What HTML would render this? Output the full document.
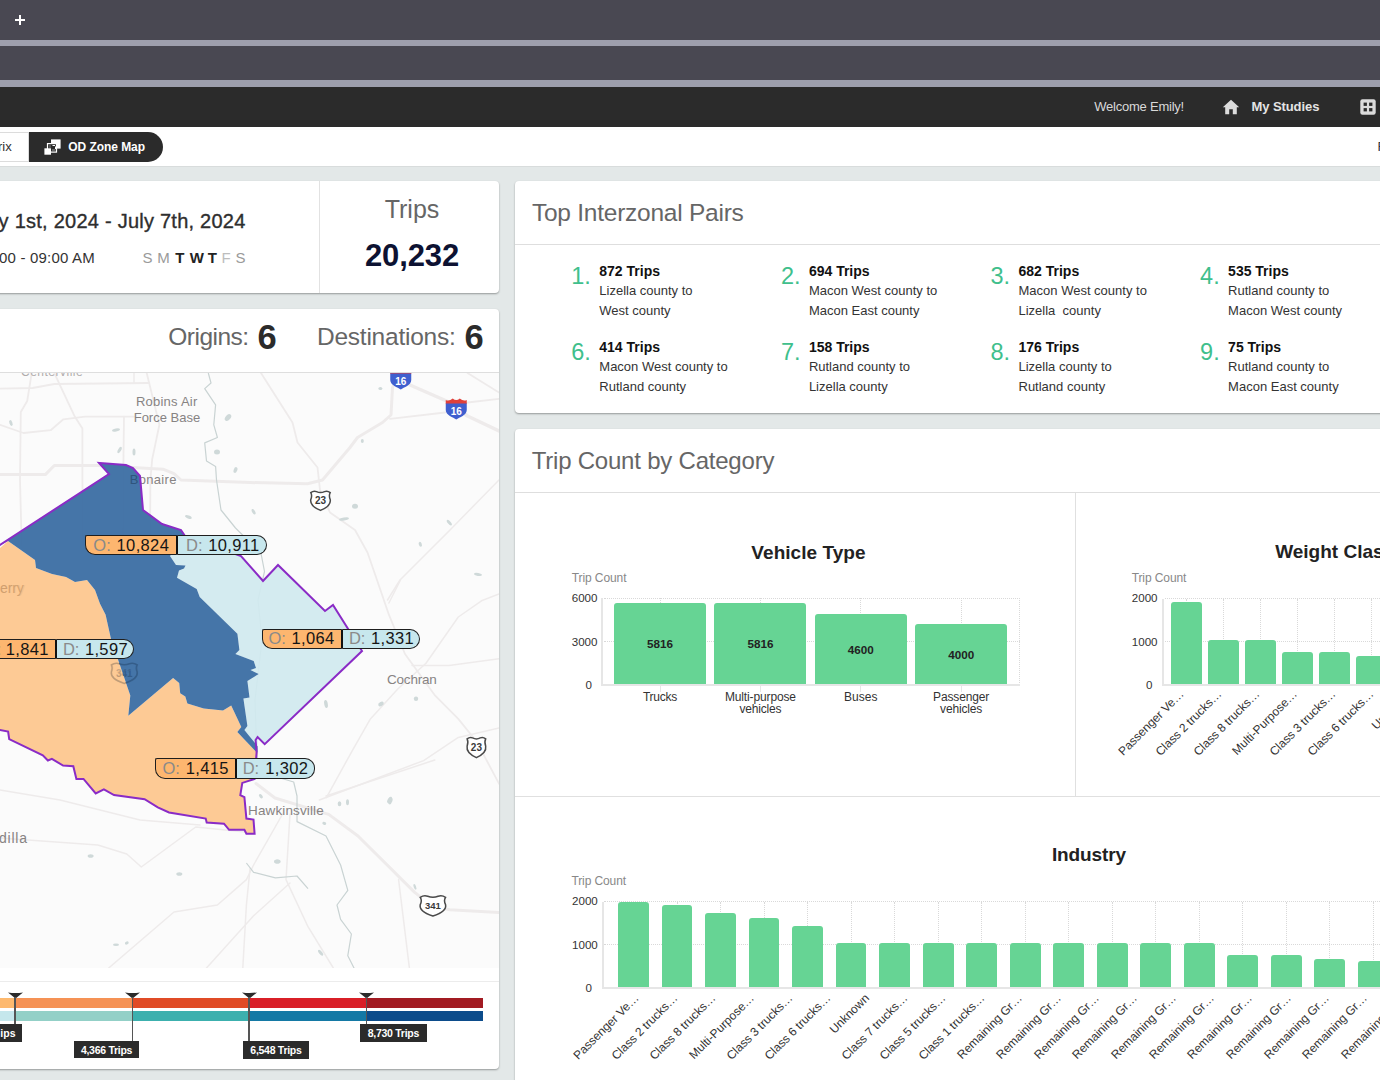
<!DOCTYPE html><html><head><meta charset="utf-8"><style>
html,body{margin:0;padding:0}
body{width:1380px;height:1080px;overflow:hidden;position:relative;background:#e3e8e8;font-family:"Liberation Sans",sans-serif}
.t{position:absolute;line-height:1;white-space:nowrap}
.b{position:absolute;box-sizing:border-box}
svg{position:absolute;overflow:hidden}
</style></head><body>
<div class="b" style="left:0px;top:0px;width:1380px;height:40px;background:#494852;"></div>
<div class="b" style="left:0px;top:40px;width:1380px;height:6px;background:#9e9fad;"></div>
<div class="b" style="left:0px;top:46px;width:1380px;height:34px;background:#494852;"></div>
<div class="b" style="left:0px;top:80px;width:1380px;height:7px;background:#9e9fad;"></div>
<div class="b" style="left:0px;top:87px;width:1380px;height:40px;background:#2b2b2b;"></div>
<div class="b" style="left:15px;top:19px;width:10px;height:2px;background:#fff;"></div>
<div class="b" style="left:19px;top:14.6px;width:2px;height:10.4px;background:#fff;"></div>
<div class="t" style="left:1094.30px;top:99.90px;font-size:13px;color:#d9d9d9;letter-spacing:-0.232px;">Welcome Emily!</div>
<svg style="left:1222px;top:99px" width="18" height="16" viewBox="0 0 18 16"><path d="M9 0.8 L17.2 8.2 L14.8 8.2 L14.8 15.2 L10.8 15.2 L10.8 10.2 L7.2 10.2 L7.2 15.2 L3.2 15.2 L3.2 8.2 L0.8 8.2 Z" fill="#dcdcdc"/></svg>
<div class="t" style="left:1251.50px;top:99.70px;font-size:13px;color:#e4e4e4;font-weight:bold;letter-spacing:-0.082px;">My Studies</div>
<svg style="left:1360px;top:99px" width="16" height="16" viewBox="0 0 16 16"><rect x="0.3" y="0.3" width="15.4" height="15.4" rx="2.2" fill="#dcdcdc"/><rect x="3.6" y="3.6" width="3.3" height="3.3" fill="#2b2b2b"/><rect x="9.1" y="3.6" width="3.3" height="3.3" fill="#2b2b2b"/><rect x="3.6" y="9.1" width="3.3" height="3.3" fill="#2b2b2b"/><rect x="9.1" y="9.1" width="3.3" height="3.3" fill="#2b2b2b"/></svg>
<div class="b" style="left:0px;top:127px;width:1380px;height:39px;background:#fff;"></div>
<div class="b" style="left:0px;top:166px;width:1380px;height:1px;background:#d8dcdc;"></div>
<div class="b" style="left:-10px;top:131.5px;width:39px;height:30.5px;background:#fff;border:1px solid #dcdcdc;"></div>
<div class="t" style="left:-2.02px;top:139.80px;font-size:13px;color:#333;">rix</div>
<div class="b" style="left:29px;top:131.5px;width:133.5px;height:30.5px;background:#2b2b2b;border-radius:0 15.5px 15.5px 0"></div>
<svg style="left:44px;top:139px" width="18" height="17" viewBox="0 0 18 17"><rect x="7" y="0.4" width="9.6" height="9.2" fill="#fff"/><rect x="3.5" y="4.6" width="9" height="8.5" fill="#2b2b2b" stroke="#fff" stroke-width="1.2"/><rect x="5" y="6" width="2" height="3" fill="#555"/><rect x="8" y="10" width="3.5" height="2" fill="#666"/><path d="M8.5 6.5 L11 6.5 M11.5 7.5 L11.5 10" stroke="#fff" stroke-width="1"/><rect x="0.4" y="9.3" width="6.6" height="6.4" fill="#fff"/></svg>
<div class="t" style="left:68.30px;top:140.64px;font-size:12px;color:#fff;font-weight:bold;letter-spacing:-0.058px;">OD Zone Map</div>
<div class="t" style="left:1377.40px;top:139.60px;font-size:13px;color:#2c3440;">F</div>
<div class="b" style="left:-10px;top:181px;width:509px;height:112px;background:#fff;border-radius:4px;box-shadow:0 1px 2px rgba(0,0,0,0.35);"></div>
<div class="b" style="left:319px;top:181px;width:1px;height:112px;background:#e2e2e2;"></div>
<div class="t" style="left:-1.40px;top:211.07px;font-size:20px;color:#2e2e2e;letter-spacing:0.244px;-webkit-text-stroke:0.35px #2e2e2e;">y 1st, 2024 - July 7th, 2024</div>
<div class="t" style="left:-1.00px;top:249.50px;font-size:15px;color:#333;letter-spacing:0.201px;">00 - 09:00 AM</div>
<div class="t" style="left:142.40px;top:249.50px;font-size:15px;color:#9a9a9a;">S</div>
<div class="t" style="left:157.30px;top:249.50px;font-size:15px;color:#9a9a9a;">M</div>
<div class="t" style="left:175.30px;top:249.50px;font-size:15px;color:#222;font-weight:bold;">T</div>
<div class="t" style="left:189.70px;top:249.50px;font-size:15px;color:#222;font-weight:bold;">W</div>
<div class="t" style="left:207.70px;top:249.50px;font-size:15px;color:#222;font-weight:bold;">T</div>
<div class="t" style="left:221.50px;top:249.50px;font-size:15px;color:#bdbdbd;">F</div>
<div class="t" style="left:235.40px;top:249.50px;font-size:15px;color:#9a9a9a;">S</div>
<div class="t" style="left:384.69px;top:196.84px;font-size:25px;color:#666;">Trips</div>
<div class="t" style="left:365.00px;top:239.76px;font-size:31px;color:#0d1232;font-weight:bold;letter-spacing:-0.136px;">20,232</div>
<div class="b" style="left:-10px;top:309px;width:509px;height:760px;background:#fff;border-radius:4px;box-shadow:0 1px 2px rgba(0,0,0,0.35);"></div>
<div class="t" style="left:168.30px;top:324.66px;font-size:24.5px;color:#666;letter-spacing:-0.514px;">Origins:</div>
<div class="t" style="left:257.60px;top:320.40px;font-size:34.5px;color:#2b2b2b;font-weight:bold;">6</div>
<div class="t" style="left:317.00px;top:324.66px;font-size:24.5px;color:#666;letter-spacing:-0.241px;">Destinations:</div>
<div class="t" style="left:464.60px;top:320.40px;font-size:34.5px;color:#2b2b2b;font-weight:bold;">6</div>
<div class="b" style="left:0px;top:372px;width:499px;height:1px;background:#dedede;"></div>
<div class="b" style="left:0px;top:981px;width:499px;height:1px;background:#ececec;"></div>
<div class="b" style="left:515px;top:181px;width:875px;height:232px;background:#fff;border-radius:4px;box-shadow:0 1px 2px rgba(0,0,0,0.35);"></div>
<div class="b" style="left:515px;top:244px;width:865px;height:1px;background:#dedede;"></div>
<div class="t" style="left:531.90px;top:200.66px;font-size:24.5px;color:#666;letter-spacing:-0.241px;">Top Interzonal Pairs</div>
<div class="t" style="left:571.30px;top:265.11px;font-size:23.5px;color:#3fbf8c;">1.</div>
<div class="t" style="left:599.30px;top:263.95px;font-size:14px;color:#111;font-weight:bold;">872 Trips</div>
<div class="t" style="left:599.30px;top:284.10px;font-size:13px;color:#333;">Lizella county to</div>
<div class="t" style="left:599.30px;top:304.00px;font-size:13px;color:#333;">West county</div>
<div class="t" style="left:780.90px;top:265.11px;font-size:23.5px;color:#3fbf8c;">2.</div>
<div class="t" style="left:808.90px;top:263.95px;font-size:14px;color:#111;font-weight:bold;">694 Trips</div>
<div class="t" style="left:808.90px;top:284.10px;font-size:13px;color:#333;">Macon West county to</div>
<div class="t" style="left:808.90px;top:304.00px;font-size:13px;color:#333;">Macon East county</div>
<div class="t" style="left:990.50px;top:265.11px;font-size:23.5px;color:#3fbf8c;">3.</div>
<div class="t" style="left:1018.50px;top:263.95px;font-size:14px;color:#111;font-weight:bold;">682 Trips</div>
<div class="t" style="left:1018.50px;top:284.10px;font-size:13px;color:#333;">Macon West county to</div>
<div class="t" style="left:1018.50px;top:304.00px;font-size:13px;color:#333;">Lizella&nbsp; county</div>
<div class="t" style="left:1200.10px;top:265.11px;font-size:23.5px;color:#3fbf8c;">4.</div>
<div class="t" style="left:1228.10px;top:263.95px;font-size:14px;color:#111;font-weight:bold;">535 Trips</div>
<div class="t" style="left:1228.10px;top:284.10px;font-size:13px;color:#333;">Rutland county to</div>
<div class="t" style="left:1228.10px;top:304.00px;font-size:13px;color:#333;">Macon West county</div>
<div class="t" style="left:571.30px;top:341.11px;font-size:23.5px;color:#3fbf8c;">6.</div>
<div class="t" style="left:599.30px;top:339.95px;font-size:14px;color:#111;font-weight:bold;">414 Trips</div>
<div class="t" style="left:599.30px;top:360.10px;font-size:13px;color:#333;">Macon West county to</div>
<div class="t" style="left:599.30px;top:380.00px;font-size:13px;color:#333;">Rutland county</div>
<div class="t" style="left:780.90px;top:341.11px;font-size:23.5px;color:#3fbf8c;">7.</div>
<div class="t" style="left:808.90px;top:339.95px;font-size:14px;color:#111;font-weight:bold;">158 Trips</div>
<div class="t" style="left:808.90px;top:360.10px;font-size:13px;color:#333;">Rutland county to</div>
<div class="t" style="left:808.90px;top:380.00px;font-size:13px;color:#333;">Lizella county</div>
<div class="t" style="left:990.50px;top:341.11px;font-size:23.5px;color:#3fbf8c;">8.</div>
<div class="t" style="left:1018.50px;top:339.95px;font-size:14px;color:#111;font-weight:bold;">176 Trips</div>
<div class="t" style="left:1018.50px;top:360.10px;font-size:13px;color:#333;">Lizella county to</div>
<div class="t" style="left:1018.50px;top:380.00px;font-size:13px;color:#333;">Rutland county</div>
<div class="t" style="left:1200.10px;top:341.11px;font-size:23.5px;color:#3fbf8c;">9.</div>
<div class="t" style="left:1228.10px;top:339.95px;font-size:14px;color:#111;font-weight:bold;">75 Trips</div>
<div class="t" style="left:1228.10px;top:360.10px;font-size:13px;color:#333;">Rutland county to</div>
<div class="t" style="left:1228.10px;top:380.00px;font-size:13px;color:#333;">Macon East county</div>
<div class="b" style="left:515px;top:429px;width:875px;height:700px;background:#fff;border-radius:4px;box-shadow:0 1px 2px rgba(0,0,0,0.35);"></div>
<div class="b" style="left:515px;top:492px;width:865px;height:1px;background:#dedede;"></div>
<div class="t" style="left:531.70px;top:448.68px;font-size:24px;color:#666;letter-spacing:-0.214px;">Trip Count by Category</div>
<div class="b" style="left:1075px;top:493px;width:1px;height:303px;background:#e0e0e0;"></div>
<div class="b" style="left:515px;top:796px;width:865px;height:1px;background:#e0e0e0;"></div>
<div class="t" style="left:751.35px;top:542.62px;font-size:19px;color:#222;font-weight:bold;letter-spacing:0.050px;">Vehicle Type</div>
<div class="t" style="left:571.80px;top:572.04px;font-size:12px;color:#888;letter-spacing:-0.098px;">Trip Count</div>
<div class="t" style="left:571.69px;top:592.18px;font-size:11.6px;color:#333;">6000</div>
<div class="t" style="left:571.69px;top:635.88px;font-size:11.6px;color:#333;">3000</div>
<div class="t" style="left:585.55px;top:678.93px;font-size:11.6px;color:#333;">0</div>
<div class="b" style="left:604px;top:597.7px;width:416px;height:0;border-top:1px dotted #d9d9d9"></div>
<div class="b" style="left:604px;top:640.75px;width:416px;height:0;border-top:1px dotted #d9d9d9"></div>
<div class="b" style="left:659.5px;top:598.2px;width:0;height:87.09999999999991px;border-left:1px dotted #d9d9d9"></div>
<div class="b" style="left:759.9px;top:598.2px;width:0;height:87.09999999999991px;border-left:1px dotted #d9d9d9"></div>
<div class="b" style="left:860.3px;top:598.2px;width:0;height:87.09999999999991px;border-left:1px dotted #d9d9d9"></div>
<div class="b" style="left:960.6px;top:598.2px;width:0;height:87.09999999999991px;border-left:1px dotted #d9d9d9"></div>
<div class="b" style="left:1019.0px;top:598.2px;width:0;height:87.09999999999991px;border-left:1px dotted #d9d9d9"></div>
<div class="b" style="left:613.90px;top:603.00px;width:92.20px;height:82.30px;background:#66d494;border-radius:3px 3px 0 0"></div>
<div class="t" style="left:646.99px;top:638.35px;font-size:11.7px;color:#222;font-weight:bold;">5816</div>
<div class="b" style="left:714.30px;top:603.00px;width:92.20px;height:82.30px;background:#66d494;border-radius:3px 3px 0 0"></div>
<div class="t" style="left:747.39px;top:638.35px;font-size:11.7px;color:#222;font-weight:bold;">5816</div>
<div class="b" style="left:814.70px;top:614.20px;width:92.20px;height:71.10px;background:#66d494;border-radius:3px 3px 0 0"></div>
<div class="t" style="left:847.79px;top:643.95px;font-size:11.7px;color:#222;font-weight:bold;">4600</div>
<div class="b" style="left:915.10px;top:624.30px;width:92.20px;height:61.00px;background:#66d494;border-radius:3px 3px 0 0"></div>
<div class="t" style="left:948.19px;top:649.00px;font-size:11.7px;color:#222;font-weight:bold;">4000</div>
<div class="b" style="left:601.4px;top:598.2px;width:2px;height:88.09999999999991px;background:#e6e6e6;"></div>
<div class="b" style="left:601.4px;top:684.3px;width:419px;height:2px;background:#e6e6e6;"></div>
<div class="b" style="left:659.5px;top:686.3px;width:1px;height:6px;background:#e6e6e6;"></div>
<div class="b" style="left:759.9px;top:686.3px;width:1px;height:6px;background:#e6e6e6;"></div>
<div class="b" style="left:860.3px;top:686.3px;width:1px;height:6px;background:#e6e6e6;"></div>
<div class="b" style="left:960.6px;top:686.3px;width:1px;height:6px;background:#e6e6e6;"></div>
<div class="t" style="left:642.95px;top:691.34px;font-size:12px;color:#333;letter-spacing:-0.243px;">Trucks</div>
<div class="t" style="left:724.90px;top:691.34px;font-size:12px;color:#333;letter-spacing:-0.131px;">Multi-purpose</div>
<div class="t" style="left:739.40px;top:703.34px;font-size:12px;color:#333;letter-spacing:-0.169px;">vehicles</div>
<div class="t" style="left:844.12px;top:691.34px;font-size:12px;color:#333;">Buses</div>
<div class="t" style="left:933.10px;top:691.34px;font-size:12px;color:#333;letter-spacing:-0.152px;">Passenger</div>
<div class="t" style="left:940.10px;top:703.34px;font-size:12px;color:#333;letter-spacing:-0.169px;">vehicles</div>
<div class="t" style="left:1275.20px;top:541.92px;font-size:19px;color:#222;font-weight:bold;">Weight Class</div>
<div class="t" style="left:1131.70px;top:572.04px;font-size:12px;color:#888;letter-spacing:-0.098px;">Trip Count</div>
<div class="t" style="left:1131.79px;top:592.28px;font-size:11.6px;color:#333;">2000</div>
<div class="t" style="left:1131.79px;top:635.78px;font-size:11.6px;color:#333;">1000</div>
<div class="t" style="left:1145.95px;top:679.18px;font-size:11.6px;color:#333;">0</div>
<div class="b" style="left:1165px;top:598.0px;width:215px;height:0;border-top:1px dotted #d9d9d9"></div>
<div class="b" style="left:1165px;top:641.3px;width:215px;height:0;border-top:1px dotted #d9d9d9"></div>
<div class="b" style="left:1186.0px;top:598.5px;width:0;height:86.70000000000005px;border-left:1px dotted #d9d9d9"></div>
<div class="b" style="left:1223.0px;top:598.5px;width:0;height:86.70000000000005px;border-left:1px dotted #d9d9d9"></div>
<div class="b" style="left:1260.0px;top:598.5px;width:0;height:86.70000000000005px;border-left:1px dotted #d9d9d9"></div>
<div class="b" style="left:1297.0px;top:598.5px;width:0;height:86.70000000000005px;border-left:1px dotted #d9d9d9"></div>
<div class="b" style="left:1334.0px;top:598.5px;width:0;height:86.70000000000005px;border-left:1px dotted #d9d9d9"></div>
<div class="b" style="left:1371.0px;top:598.5px;width:0;height:86.70000000000005px;border-left:1px dotted #d9d9d9"></div>
<div class="b" style="left:1408.0px;top:598.5px;width:0;height:86.70000000000005px;border-left:1px dotted #d9d9d9"></div>
<div class="b" style="left:1171.00px;top:602.00px;width:31.00px;height:83.20px;background:#66d494;border-radius:3px 3px 0 0"></div>
<div class="t" style="left:1094.78px;top:685.80px;font-size:12px;color:#333;transform-origin:100% 50%;transform:rotate(-45deg)">Passenger Ve…</div>
<div class="b" style="left:1208.00px;top:640.00px;width:31.00px;height:45.20px;background:#66d494;border-radius:3px 3px 0 0"></div>
<div class="t" style="left:1132.15px;top:685.80px;font-size:12px;color:#333;transform-origin:100% 50%;transform:rotate(-45deg)">Class 2 trucks…</div>
<div class="b" style="left:1245.00px;top:640.00px;width:31.00px;height:45.20px;background:#66d494;border-radius:3px 3px 0 0"></div>
<div class="t" style="left:1170.15px;top:685.80px;font-size:12px;color:#333;transform-origin:100% 50%;transform:rotate(-45deg)">Class 8 trucks…</div>
<div class="b" style="left:1282.00px;top:652.30px;width:31.00px;height:32.90px;background:#66d494;border-radius:3px 3px 0 0"></div>
<div class="t" style="left:1209.47px;top:685.80px;font-size:12px;color:#333;transform-origin:100% 50%;transform:rotate(-45deg)">Multi-Purpose…</div>
<div class="b" style="left:1319.00px;top:652.30px;width:31.00px;height:32.90px;background:#66d494;border-radius:3px 3px 0 0"></div>
<div class="t" style="left:1246.15px;top:685.80px;font-size:12px;color:#333;transform-origin:100% 50%;transform:rotate(-45deg)">Class 3 trucks…</div>
<div class="b" style="left:1356.00px;top:656.00px;width:31.00px;height:29.20px;background:#66d494;border-radius:3px 3px 0 0"></div>
<div class="t" style="left:1284.15px;top:685.80px;font-size:12px;color:#333;transform-origin:100% 50%;transform:rotate(-45deg)">Class 6 trucks…</div>
<div class="b" style="left:1393.00px;top:660.00px;width:31.00px;height:25.20px;background:#66d494;border-radius:3px 3px 0 0"></div>
<div class="t" style="left:1359.47px;top:685.80px;font-size:12px;color:#333;transform-origin:100% 50%;transform:rotate(-45deg)">Unknown</div>
<div class="b" style="left:1162.3px;top:598.5px;width:2px;height:87.70000000000005px;background:#e6e6e6;"></div>
<div class="b" style="left:1162.3px;top:684.2px;width:230px;height:2px;background:#e6e6e6;"></div>
<div class="t" style="left:1051.90px;top:845.42px;font-size:19px;color:#222;font-weight:bold;letter-spacing:-0.119px;">Industry</div>
<div class="t" style="left:571.40px;top:874.84px;font-size:12px;color:#888;letter-spacing:-0.098px;">Trip Count</div>
<div class="t" style="left:571.99px;top:895.48px;font-size:11.6px;color:#333;">2000</div>
<div class="t" style="left:571.99px;top:938.78px;font-size:11.6px;color:#333;">1000</div>
<div class="t" style="left:585.55px;top:982.08px;font-size:11.6px;color:#333;">0</div>
<div class="b" style="left:604px;top:901.2px;width:776px;height:0;border-top:1px dotted #d9d9d9"></div>
<div class="b" style="left:604px;top:944.3px;width:776px;height:0;border-top:1px dotted #d9d9d9"></div>
<div class="b" style="left:633.0px;top:901.7px;width:0;height:86.29999999999995px;border-left:1px dotted #d9d9d9"></div>
<div class="b" style="left:676.52px;top:901.7px;width:0;height:86.29999999999995px;border-left:1px dotted #d9d9d9"></div>
<div class="b" style="left:720.04px;top:901.7px;width:0;height:86.29999999999995px;border-left:1px dotted #d9d9d9"></div>
<div class="b" style="left:763.5600000000001px;top:901.7px;width:0;height:86.29999999999995px;border-left:1px dotted #d9d9d9"></div>
<div class="b" style="left:807.08px;top:901.7px;width:0;height:86.29999999999995px;border-left:1px dotted #d9d9d9"></div>
<div class="b" style="left:850.6px;top:901.7px;width:0;height:86.29999999999995px;border-left:1px dotted #d9d9d9"></div>
<div class="b" style="left:894.12px;top:901.7px;width:0;height:86.29999999999995px;border-left:1px dotted #d9d9d9"></div>
<div class="b" style="left:937.64px;top:901.7px;width:0;height:86.29999999999995px;border-left:1px dotted #d9d9d9"></div>
<div class="b" style="left:981.16px;top:901.7px;width:0;height:86.29999999999995px;border-left:1px dotted #d9d9d9"></div>
<div class="b" style="left:1024.68px;top:901.7px;width:0;height:86.29999999999995px;border-left:1px dotted #d9d9d9"></div>
<div class="b" style="left:1068.2000000000003px;top:901.7px;width:0;height:86.29999999999995px;border-left:1px dotted #d9d9d9"></div>
<div class="b" style="left:1111.7200000000003px;top:901.7px;width:0;height:86.29999999999995px;border-left:1px dotted #d9d9d9"></div>
<div class="b" style="left:1155.2400000000002px;top:901.7px;width:0;height:86.29999999999995px;border-left:1px dotted #d9d9d9"></div>
<div class="b" style="left:1198.7600000000002px;top:901.7px;width:0;height:86.29999999999995px;border-left:1px dotted #d9d9d9"></div>
<div class="b" style="left:1242.2800000000002px;top:901.7px;width:0;height:86.29999999999995px;border-left:1px dotted #d9d9d9"></div>
<div class="b" style="left:1285.8000000000002px;top:901.7px;width:0;height:86.29999999999995px;border-left:1px dotted #d9d9d9"></div>
<div class="b" style="left:1329.3200000000002px;top:901.7px;width:0;height:86.29999999999995px;border-left:1px dotted #d9d9d9"></div>
<div class="b" style="left:1372.8400000000001px;top:901.7px;width:0;height:86.29999999999995px;border-left:1px dotted #d9d9d9"></div>
<div class="b" style="left:618.10px;top:902.30px;width:30.80px;height:85.70px;background:#66d494;border-radius:3px 3px 0 0"></div>
<div class="b" style="left:661.62px;top:905.20px;width:30.80px;height:82.80px;background:#66d494;border-radius:3px 3px 0 0"></div>
<div class="b" style="left:705.14px;top:913.20px;width:30.80px;height:74.80px;background:#66d494;border-radius:3px 3px 0 0"></div>
<div class="b" style="left:748.66px;top:917.90px;width:30.80px;height:70.10px;background:#66d494;border-radius:3px 3px 0 0"></div>
<div class="b" style="left:792.18px;top:925.90px;width:30.80px;height:62.10px;background:#66d494;border-radius:3px 3px 0 0"></div>
<div class="b" style="left:835.70px;top:942.90px;width:30.80px;height:45.10px;background:#66d494;border-radius:3px 3px 0 0"></div>
<div class="b" style="left:879.22px;top:942.90px;width:30.80px;height:45.10px;background:#66d494;border-radius:3px 3px 0 0"></div>
<div class="b" style="left:922.74px;top:942.90px;width:30.80px;height:45.10px;background:#66d494;border-radius:3px 3px 0 0"></div>
<div class="b" style="left:966.26px;top:942.90px;width:30.80px;height:45.10px;background:#66d494;border-radius:3px 3px 0 0"></div>
<div class="b" style="left:1009.78px;top:942.90px;width:30.80px;height:45.10px;background:#66d494;border-radius:3px 3px 0 0"></div>
<div class="b" style="left:1053.30px;top:942.90px;width:30.80px;height:45.10px;background:#66d494;border-radius:3px 3px 0 0"></div>
<div class="b" style="left:1096.82px;top:942.90px;width:30.80px;height:45.10px;background:#66d494;border-radius:3px 3px 0 0"></div>
<div class="b" style="left:1140.34px;top:942.90px;width:30.80px;height:45.10px;background:#66d494;border-radius:3px 3px 0 0"></div>
<div class="b" style="left:1183.86px;top:942.90px;width:30.80px;height:45.10px;background:#66d494;border-radius:3px 3px 0 0"></div>
<div class="b" style="left:1227.38px;top:955.20px;width:30.80px;height:32.80px;background:#66d494;border-radius:3px 3px 0 0"></div>
<div class="b" style="left:1270.90px;top:955.20px;width:30.80px;height:32.80px;background:#66d494;border-radius:3px 3px 0 0"></div>
<div class="b" style="left:1314.42px;top:958.90px;width:30.80px;height:29.10px;background:#66d494;border-radius:3px 3px 0 0"></div>
<div class="b" style="left:1357.94px;top:961.30px;width:30.80px;height:26.70px;background:#66d494;border-radius:3px 3px 0 0"></div>
<div class="t" style="left:550.28px;top:990.40px;font-size:12px;color:#333;transform-origin:100% 50%;transform:rotate(-45deg)">Passenger Ve…</div>
<div class="t" style="left:587.98px;top:990.40px;font-size:12px;color:#333;transform-origin:100% 50%;transform:rotate(-45deg)">Class 2 trucks…</div>
<div class="t" style="left:626.31px;top:990.40px;font-size:12px;color:#333;transform-origin:100% 50%;transform:rotate(-45deg)">Class 8 trucks…</div>
<div class="t" style="left:665.96px;top:990.40px;font-size:12px;color:#333;transform-origin:100% 50%;transform:rotate(-45deg)">Multi-Purpose…</div>
<div class="t" style="left:702.97px;top:990.40px;font-size:12px;color:#333;transform-origin:100% 50%;transform:rotate(-45deg)">Class 3 trucks…</div>
<div class="t" style="left:741.30px;top:990.40px;font-size:12px;color:#333;transform-origin:100% 50%;transform:rotate(-45deg)">Class 6 trucks…</div>
<div class="t" style="left:816.95px;top:990.40px;font-size:12px;color:#333;transform-origin:100% 50%;transform:rotate(-45deg)">Unknown</div>
<div class="t" style="left:817.96px;top:990.40px;font-size:12px;color:#333;transform-origin:100% 50%;transform:rotate(-45deg)">Class 7 trucks…</div>
<div class="t" style="left:856.29px;top:990.40px;font-size:12px;color:#333;transform-origin:100% 50%;transform:rotate(-45deg)">Class 5 trucks…</div>
<div class="t" style="left:894.62px;top:990.40px;font-size:12px;color:#333;transform-origin:100% 50%;transform:rotate(-45deg)">Class 1 trucks…</div>
<div class="t" style="left:934.27px;top:990.40px;font-size:12px;color:#333;transform-origin:100% 50%;transform:rotate(-45deg)">Remaining Gr…</div>
<div class="t" style="left:972.60px;top:990.40px;font-size:12px;color:#333;transform-origin:100% 50%;transform:rotate(-45deg)">Remaining Gr…</div>
<div class="t" style="left:1010.93px;top:990.40px;font-size:12px;color:#333;transform-origin:100% 50%;transform:rotate(-45deg)">Remaining Gr…</div>
<div class="t" style="left:1049.26px;top:990.40px;font-size:12px;color:#333;transform-origin:100% 50%;transform:rotate(-45deg)">Remaining Gr…</div>
<div class="t" style="left:1087.59px;top:990.40px;font-size:12px;color:#333;transform-origin:100% 50%;transform:rotate(-45deg)">Remaining Gr…</div>
<div class="t" style="left:1125.92px;top:990.40px;font-size:12px;color:#333;transform-origin:100% 50%;transform:rotate(-45deg)">Remaining Gr…</div>
<div class="t" style="left:1164.25px;top:990.40px;font-size:12px;color:#333;transform-origin:100% 50%;transform:rotate(-45deg)">Remaining Gr…</div>
<div class="t" style="left:1202.58px;top:990.40px;font-size:12px;color:#333;transform-origin:100% 50%;transform:rotate(-45deg)">Remaining Gr…</div>
<div class="t" style="left:1240.91px;top:990.40px;font-size:12px;color:#333;transform-origin:100% 50%;transform:rotate(-45deg)">Remaining Gr…</div>
<div class="t" style="left:1279.24px;top:990.40px;font-size:12px;color:#333;transform-origin:100% 50%;transform:rotate(-45deg)">Remaining Gr…</div>
<div class="t" style="left:1317.57px;top:990.40px;font-size:12px;color:#333;transform-origin:100% 50%;transform:rotate(-45deg)">Remaining Gr…</div>
<div class="b" style="left:601.5px;top:901.7px;width:2px;height:87.29999999999995px;background:#e6e6e6;"></div>
<div class="b" style="left:601.5px;top:987px;width:790px;height:2px;background:#e6e6e6;"></div>
<svg style="left:0;top:373px" width="499" height="595" viewBox="0 373 499 595">
<rect x="0" y="373" width="499" height="595" fill="#fbfbfb"/>
<polyline points="0.0,388.6 32.6,388.0 54.3,384.0 148.6,383.0" fill="none" stroke="#eeebeb" stroke-width="1.8" stroke-linejoin="round" stroke-linecap="round"/>
<polyline points="31.7,373.0 27.2,401.0 20.8,412.0 20.0,480.0 21.7,545.0" fill="none" stroke="#eeebeb" stroke-width="1.8" stroke-linejoin="round" stroke-linecap="round"/>
<polyline points="54.3,373.0 74.3,415.7 82.4,428.4 82.4,480.0 83.0,545.0" fill="none" stroke="#eeebeb" stroke-width="1.8" stroke-linejoin="round" stroke-linecap="round"/>
<polyline points="0.0,424.8 23.5,433.0 50.7,430.2 63.4,419.3 85.0,416.6 134.0,416.6" fill="none" stroke="#eeebeb" stroke-width="1.8" stroke-linejoin="round" stroke-linecap="round"/>
<polyline points="124.0,416.6 123.2,480.0 123.0,545.0" fill="none" stroke="#eeebeb" stroke-width="1.8" stroke-linejoin="round" stroke-linecap="round"/>
<polyline points="146.7,373.0 159.4,424.8 152.2,459.2 150.4,480.0 150.0,540.0" fill="none" stroke="#eeebeb" stroke-width="1.8" stroke-linejoin="round" stroke-linecap="round"/>
<polyline points="134.0,373.0 134.0,383.0" fill="none" stroke="#eeebeb" stroke-width="1.5" stroke-linejoin="round" stroke-linecap="round"/>
<polyline points="0.0,474.6 45.3,474.6 54.3,465.5 97.8,465.5 163.0,469.2 174.0,473.7 181.0,480.0 250.0,482.5 307.5,483.8 322.5,480.0 350.0,447.5 357.5,437.5 382.5,422.5 391.0,415.0 392.5,387.5 398.0,375.0" fill="none" stroke="#eeebeb" stroke-width="3" stroke-linejoin="round" stroke-linecap="round"/>
<polyline points="261.0,373.0 292.5,422.5 297.5,442.5 317.5,467.5 320.0,490.0 330.0,512.5 355.0,530.0 367.5,552.5 377.0,580.0 388.9,614.7 405.0,654.0 435.2,695.7 458.3,718.9 476.9,742.0 499.0,783.7" fill="none" stroke="#eeebeb" stroke-width="1.8" stroke-linejoin="round" stroke-linecap="round"/>
<polyline points="410.0,385.0 450.0,402.5 467.5,416.0 499.0,431.0" fill="none" stroke="#eeebeb" stroke-width="3.5" stroke-linejoin="round" stroke-linecap="round"/>
<polyline points="390.0,418.8 445.0,412.5 467.5,402.5 499.0,398.8" fill="none" stroke="#eeebeb" stroke-width="1.8" stroke-linejoin="round" stroke-linecap="round"/>
<polyline points="499.0,480.0 450.0,530.0 400.0,580.0 387.5,600.0" fill="none" stroke="#eeebeb" stroke-width="1.5" stroke-linejoin="round" stroke-linecap="round"/>
<polyline points="467.5,373.0 499.0,392.5" fill="none" stroke="#eeebeb" stroke-width="1.8" stroke-linejoin="round" stroke-linecap="round"/>
<polyline points="326.4,797.6 351.9,751.3 370.4,718.9 398.0,688.8 426.0,663.3 458.3,617.0 481.5,600.8 499.0,593.9" fill="none" stroke="#eeebeb" stroke-width="1.5" stroke-linejoin="round" stroke-linecap="round"/>
<polyline points="412.0,665.6 449.0,665.6 499.0,658.7" fill="none" stroke="#eeebeb" stroke-width="1.5" stroke-linejoin="round" stroke-linecap="round"/>
<polyline points="319.4,800.0 423.6,760.6 458.3,737.4 499.0,728.0" fill="none" stroke="#eeebeb" stroke-width="1.5" stroke-linejoin="round" stroke-linecap="round"/>
<polyline points="400.5,580.0 388.9,603.0" fill="none" stroke="#eeebeb" stroke-width="1.5" stroke-linejoin="round" stroke-linecap="round"/>
<polyline points="256.0,783.5 275.0,798.0 328.7,814.4 358.0,836.0 414.7,892.4 432.0,906.0 449.7,909.8 499.0,912.5" fill="none" stroke="#eeebeb" stroke-width="3" stroke-linejoin="round" stroke-linecap="round"/>
<polyline points="0.0,838.0 97.8,845.0 126.8,854.0 141.3,867.0 195.7,827.0 250.0,832.5" fill="none" stroke="#eeebeb" stroke-width="1.5" stroke-linejoin="round" stroke-linecap="round"/>
<polyline points="282.6,814.0 253.6,865.0 246.4,879.6 217.4,905.0 174.0,912.0 108.7,968.0" fill="none" stroke="#eeebeb" stroke-width="1.5" stroke-linejoin="round" stroke-linecap="round"/>
<polyline points="250.0,868.7 246.4,905.0 242.8,968.0" fill="none" stroke="#eeebeb" stroke-width="1.5" stroke-linejoin="round" stroke-linecap="round"/>
<polyline points="290.0,814.0 286.0,879.6 308.0,926.7 333.3,968.0" fill="none" stroke="#eeebeb" stroke-width="1.5" stroke-linejoin="round" stroke-linecap="round"/>
<polyline points="290.0,883.0 253.6,915.8 206.5,968.0" fill="none" stroke="#eeebeb" stroke-width="1.5" stroke-linejoin="round" stroke-linecap="round"/>
<polyline points="398.6,879.6 409.4,968.0" fill="none" stroke="#eeebeb" stroke-width="1.5" stroke-linejoin="round" stroke-linecap="round"/>
<polyline points="326.0,796.0 434.8,760.0" fill="none" stroke="#eeebeb" stroke-width="1.5" stroke-linejoin="round" stroke-linecap="round"/>
<polyline points="0.0,790.0 60.0,800.0 140.0,820.0 200.0,825.0" fill="none" stroke="#eeebeb" stroke-width="1.5" stroke-linejoin="round" stroke-linecap="round"/>
<polyline points="208.3,373.0 211.0,383.0 204.7,388.6 215.6,404.9 213.8,424.8 217.4,437.5 204.7,442.9 206.5,461.0 215.6,466.4 216.5,480.0 221.0,510.0 235.5,528.0 261.0,553.4 264.5,571.5 258.0,600.0 262.0,640.0 255.0,700.0 257.0,760.0 270.0,775.0 293.7,782.0 297.0,796.0 297.0,821.6 326.0,836.0 340.6,865.0 347.8,890.4 337.0,905.0 340.6,919.4 351.4,934.0 347.8,955.7 355.0,970.0" fill="none" stroke="#c9d3d3" stroke-width="1.2" stroke-linejoin="round"/>
<polyline points="246.4,863.0 253.6,872.3 275.4,877.8 297.0,876.0 308.0,888.6" fill="none" stroke="#c9d3d3" stroke-width="1.2" stroke-linejoin="round"/>
<ellipse cx="228" cy="417.5" rx="4" ry="2.5" transform="rotate(-50 228 417.5)" fill="#cfd9d9"/>
<ellipse cx="217" cy="452" rx="3" ry="2.5" transform="rotate(0 217 452)" fill="#cfd9d9"/>
<ellipse cx="235.5" cy="470" rx="1.8" ry="3" transform="rotate(20 235.5 470)" fill="#cfd9d9"/>
<ellipse cx="116" cy="430" rx="4" ry="1.5" transform="rotate(-10 116 430)" fill="#cfd9d9"/>
<ellipse cx="119.6" cy="450" rx="1.5" ry="3.5" transform="rotate(30 119.6 450)" fill="#cfd9d9"/>
<ellipse cx="134" cy="452" rx="1.5" ry="3.5" transform="rotate(0 134 452)" fill="#cfd9d9"/>
<ellipse cx="188.4" cy="517" rx="3.5" ry="1.5" transform="rotate(20 188.4 517)" fill="#cfd9d9"/>
<ellipse cx="253.6" cy="511.7" rx="1.5" ry="3" transform="rotate(-30 253.6 511.7)" fill="#cfd9d9"/>
<ellipse cx="355" cy="506.3" rx="3" ry="2.5" transform="rotate(0 355 506.3)" fill="#cfd9d9"/>
<ellipse cx="344" cy="519" rx="5" ry="1.5" transform="rotate(-10 344 519)" fill="#cfd9d9"/>
<ellipse cx="449.3" cy="522.6" rx="1.5" ry="3.5" transform="rotate(-40 449.3 522.6)" fill="#cfd9d9"/>
<ellipse cx="420.3" cy="544.3" rx="1.5" ry="2.5" transform="rotate(-20 420.3 544.3)" fill="#cfd9d9"/>
<ellipse cx="478" cy="574.4" rx="4" ry="1.5" transform="rotate(10 478 574.4)" fill="#cfd9d9"/>
<ellipse cx="380.4" cy="388.6" rx="2" ry="1.5" transform="rotate(0 380.4 388.6)" fill="#cfd9d9"/>
<ellipse cx="362.3" cy="441" rx="1.5" ry="2" transform="rotate(0 362.3 441)" fill="#cfd9d9"/>
<ellipse cx="10.9" cy="423" rx="1.5" ry="3" transform="rotate(-20 10.9 423)" fill="#cfd9d9"/>
<ellipse cx="326" cy="704" rx="1.8" ry="4" transform="rotate(-10 326 704)" fill="#cfd9d9"/>
<ellipse cx="381" cy="704" rx="3" ry="2" transform="rotate(-30 381 704)" fill="#cfd9d9"/>
<ellipse cx="416" cy="698.8" rx="2.2" ry="2.2" transform="rotate(0 416 698.8)" fill="#cfd9d9"/>
<ellipse cx="390.5" cy="801" rx="1.8" ry="3.5" transform="rotate(20 390.5 801)" fill="#cfd9d9"/>
<ellipse cx="339.5" cy="803.7" rx="1.8" ry="2.5" transform="rotate(0 339.5 803.7)" fill="#cfd9d9"/>
<ellipse cx="347.5" cy="802.3" rx="1.5" ry="3" transform="rotate(0 347.5 802.3)" fill="#cfd9d9"/>
<ellipse cx="277.6" cy="861.5" rx="3" ry="2" transform="rotate(0 277.6 861.5)" fill="#cfd9d9"/>
<ellipse cx="320.6" cy="952.8" rx="1.5" ry="3.5" transform="rotate(-40 320.6 952.8)" fill="#cfd9d9"/>
<ellipse cx="90.6" cy="856" rx="3" ry="1.8" transform="rotate(0 90.6 856)" fill="#cfd9d9"/>
<ellipse cx="179.3" cy="874" rx="3" ry="1.8" transform="rotate(0 179.3 874)" fill="#cfd9d9"/>
<ellipse cx="116" cy="944.8" rx="3" ry="1.2" transform="rotate(0 116 944.8)" fill="#cfd9d9"/>
<ellipse cx="126.8" cy="943" rx="2" ry="1.5" transform="rotate(-30 126.8 943)" fill="#cfd9d9"/>
<ellipse cx="277" cy="861.4" rx="3" ry="2" transform="rotate(0 277 861.4)" fill="#cfd9d9"/>
<ellipse cx="389.5" cy="799.9" rx="1.8" ry="3.5" transform="rotate(30 389.5 799.9)" fill="#cfd9d9"/>
<ellipse cx="260.9" cy="796.2" rx="1.5" ry="2.5" transform="rotate(-40 260.9 796.2)" fill="#cfd9d9"/>
<ellipse cx="324.3" cy="823.4" rx="2" ry="1.5" transform="rotate(20 324.3 823.4)" fill="#cfd9d9"/>
<ellipse cx="414.9" cy="886.8" rx="1.2" ry="3" transform="rotate(-20 414.9 886.8)" fill="#cfd9d9"/>
<text x="135.9" y="405.8" font-size="13" fill="#878383" letter-spacing="0.24" font-family="Liberation Sans">Robins Air</text>
<text x="133.7" y="421.5" font-size="13" fill="#878383" letter-spacing="0.00" font-family="Liberation Sans">Force Base</text>
<text x="129.7" y="484.4" font-size="13" fill="#878383" letter-spacing="0.31" font-family="Liberation Sans">Bonaire</text>
<text x="0" y="593" font-size="14" fill="#878383" letter-spacing="0.40" font-family="Liberation Sans">erry</text>
<text x="387" y="683.5" font-size="13.5" fill="#878383" letter-spacing="-0.20" font-family="Liberation Sans">Cochran</text>
<text x="248" y="815" font-size="13.5" fill="#878383" letter-spacing="0.13" font-family="Liberation Sans">Hawkinsville</text>
<text x="-1" y="842.6" font-size="14" fill="#878383" letter-spacing="0.78" font-family="Liberation Sans">dilla</text>
<text x="21" y="375.5" font-size="12" fill="#b0acac" font-family="Liberation Sans" letter-spacing="0.5">Centerville</text>
<g opacity="1"><path d="M310.80,492.60 Q313.50,490.40 316.50,491.60 Q320.50,493.60 324.50,491.60 Q327.50,490.40 330.20,492.60 Q328.60,495.50 330.20,499.50 Q331.40,506.00 320.50,510.40 Q309.60,506.00 310.80,499.50 Q312.40,495.50 310.80,492.60 Z" fill="#fff" stroke="#4a4a4a" stroke-width="1.5"/>
<text x="320.5" y="504.3" font-size="10" font-weight="bold" fill="#3a3a3a" text-anchor="middle" font-family="Liberation Sans">23</text></g>
<g opacity="1"><path d="M467.12,738.92 Q469.70,736.62 472.57,737.88 Q476.40,739.97 480.23,737.88 Q483.10,736.62 485.68,738.92 Q484.15,741.96 485.68,746.15 Q486.83,752.96 476.40,757.57 Q465.97,752.96 467.12,746.15 Q468.65,741.96 467.12,738.92 Z" fill="#fff" stroke="#4a4a4a" stroke-width="1.5"/>
<text x="476.4" y="751.0" font-size="10" font-weight="bold" fill="#3a3a3a" text-anchor="middle" font-family="Liberation Sans">23</text></g>
<g opacity="1"><path d="M420.25,897.32 Q423.77,895.02 427.68,896.28 Q432.90,898.37 438.12,896.28 Q442.03,895.02 445.55,897.32 Q443.47,900.36 445.55,904.55 Q447.12,911.36 432.90,915.97 Q418.68,911.36 420.25,904.55 Q422.33,900.36 420.25,897.32 Z" fill="#fff" stroke="#4a4a4a" stroke-width="1.5"/>
<text x="432.9" y="909.4" font-size="9.5" font-weight="bold" fill="#3a3a3a" text-anchor="middle" font-family="Liberation Sans">341</text></g>
<path d="M390.25,370.0 Q393.75,371.5 397.25,368.5 Q400.75,371.5 404.25,368.5 Q407.75,371.5 411.25,370.0 L411.25,374.0 L390.25,374.0 Z" fill="#e0403a"/><path d="M390.25,373.5 L411.25,373.5 L411.25,380.05 C411.25,385.3 403.75,387.5 400.75,389.5 C397.75,387.5 390.25,385.3 390.25,380.05 Z" fill="#3f5fcf"/>
<text x="400.75" y="385" font-size="10" font-weight="bold" fill="#fff" text-anchor="middle" font-family="Liberation Sans">16</text>
<path d="M445.75,400.0 Q449.25,401.5 452.75,398.5 Q456.25,401.5 459.75,398.5 Q463.25,401.5 466.75,400.0 L466.75,404.0 L445.75,404.0 Z" fill="#e0403a"/><path d="M445.75,403.5 L466.75,403.5 L466.75,410.05 C466.75,415.3 459.25,417.5 456.25,419.5 C453.25,417.5 445.75,415.3 445.75,410.05 Z" fill="#3f5fcf"/>
<text x="456.25" y="415" font-size="10" font-weight="bold" fill="#fff" text-anchor="middle" font-family="Liberation Sans">16</text>
<g opacity="1"><path d="M111.65,664.72 Q115.17,662.42 119.08,663.68 Q124.30,665.77 129.52,663.68 Q133.43,662.42 136.95,664.72 Q134.87,667.76 136.95,671.95 Q138.52,678.76 124.30,683.37 Q110.08,678.76 111.65,671.95 Q113.73,667.76 111.65,664.72 Z" fill="#fff" stroke="#4a4a4a" stroke-width="1.5"/>
<text x="124.3" y="676.8" font-size="9.5" font-weight="bold" fill="#3a3a3a" text-anchor="middle" font-family="Liberation Sans">341</text></g>
<polygon points="-5.0,548.0 0.0,548.0 8.0,541.0 35.0,560.0 36.0,568.0 52.0,574.0 66.0,577.0 75.0,582.0 87.0,580.0 95.0,590.0 100.0,603.7 105.6,614.8 111.0,639.0 130.3,695.4 128.3,715.7 173.1,678.0 179.2,683.1 180.2,693.3 185.3,696.4 187.4,703.5 203.7,708.6 223.0,710.6 231.2,705.5 241.3,726.9 237.3,732.0 254.6,750.3 257.6,752.4 254.6,778.9 242.3,782.9 240.3,795.1 244.4,797.2 246.4,818.6 253.5,819.6 254.6,833.8 246.4,833.8 244.4,829.8 229.1,829.8 224.0,823.7 206.7,822.6 205.7,818.6 169.0,812.5 157.8,807.4 144.6,799.2 114.0,795.1 103.9,789.4 95.7,793.5 83.5,778.9 76.4,778.9 73.3,766.2 63.1,765.6 51.9,758.9 47.9,760.5 42.8,755.4 9.2,739.1 8.1,731.6 0.0,730.0 -5.0,730.0" fill="#fdc68d" fill-opacity="0.93"/>
<polygon points="185.0,536.0 241.0,556.0 263.0,581.0 278.0,565.0 325.0,611.0 333.0,605.0 362.0,651.0 264.7,744.2 257.6,737.0 257.6,752.4 257.6,746.3 244.4,730.0 247.4,726.0 243.4,698.4 249.5,697.4 247.4,681.0 258.6,674.0 250.5,670.0 256.0,668.0 253.7,661.0 235.4,654.0 239.4,650.0 237.4,633.7 199.7,597.0 196.7,588.9 177.0,577.7 179.0,570.5 184.0,568.5 185.5,565.5 176.0,565.0 170.0,556.0 175.0,550.0" fill="#d1e9ef" fill-opacity="0.93"/>
<polygon points="0.0,545.0 109.0,474.0 99.0,463.0 126.0,465.0 133.0,468.0 140.0,476.0 143.0,510.0 162.0,524.0 181.0,530.0 185.0,536.0 175.0,550.0 170.0,556.0 176.0,565.0 185.5,565.5 184.0,568.5 179.0,570.5 177.0,577.7 196.7,588.9 199.7,597.0 237.4,633.7 239.4,650.0 235.4,654.0 253.7,661.0 256.0,668.0 250.5,670.0 258.6,674.0 247.4,681.0 249.5,697.4 243.4,698.4 247.4,726.0 244.4,730.0 257.6,746.3 257.6,752.4 254.6,750.3 237.3,732.0 241.3,726.9 231.2,705.5 223.0,710.6 203.7,708.6 187.4,703.5 185.3,696.4 180.2,693.3 179.2,683.1 173.1,678.0 128.3,715.7 130.3,695.4 111.0,639.0 105.6,614.8 100.0,603.7 95.0,590.0 87.0,580.0 75.0,582.0 66.0,577.0 52.0,574.0 36.0,568.0 35.0,560.0 8.0,541.0" fill="#3b6ea3" fill-opacity="0.95"/>
<polyline points="-5.0,548.0 0.0,545.0 109.0,474.0 99.0,463.0 126.0,465.0 133.0,468.0 140.0,476.0 143.0,510.0 162.0,524.0 181.0,530.0 185.0,536.0 241.0,556.0 263.0,581.0 278.0,565.0 325.0,611.0 333.0,605.0 362.0,651.0 264.7,744.2 257.6,737.0 255.6,740.0 256.6,752.4 254.6,778.9 242.3,782.9 240.3,795.1 244.4,797.2 246.4,818.6 253.5,819.6 254.6,833.8 246.4,833.8 244.4,829.8 229.1,829.8 224.0,823.7 206.7,822.6 205.7,818.6 169.0,812.5 157.8,807.4 144.6,799.2 114.0,795.1 103.9,789.4 95.7,793.5 83.5,778.9 76.4,778.9 73.3,766.2 63.1,765.6 51.9,758.9 47.9,760.5 42.8,755.4 9.2,739.1 8.1,731.6 0.0,730.0 -5.0,730.0" fill="none" stroke="#8a2bc6" stroke-width="2" stroke-linejoin="miter"/>
<g opacity="0.22"><path d="M111.3,665 Q115.3,662.5 119.3,663.8 Q124.3,665.6 129.3,663.8 Q133.3,662.5 137.3,665 Q135.8,668 137.3,672 Q138.3,679 124.3,683.5 Q110.3,679 111.3,672 Q112.8,668 111.3,665 Z" fill="none" stroke="#1b2a40" stroke-width="1.5"/><text x="124.3" y="677" font-size="10" font-weight="bold" fill="#1b2a40" text-anchor="middle" font-family="Liberation Sans">341</text></g>
<text x="0" y="593" font-size="14" fill="#b98a5c" opacity="0.6" letter-spacing="-0.1" font-family="Liberation Sans">erry</text>
<text x="129.7" y="484.4" font-size="13" fill="#1e3550" opacity="0.45" letter-spacing="0" font-family="Liberation Sans" clip-path="url(#bclip)">B</text>
<clipPath id="bclip"><polygon points="0.0,545.0 109.0,474.0 99.0,463.0 126.0,465.0 133.0,468.0 140.0,476.0 143.0,510.0 162.0,524.0 181.0,530.0 185.0,536.0 175.0,550.0 170.0,556.0 176.0,565.0 185.5,565.5 184.0,568.5 179.0,570.5 177.0,577.7 196.7,588.9 199.7,597.0 237.4,633.7 239.4,650.0 235.4,654.0 253.7,661.0 256.0,668.0 250.5,670.0 258.6,674.0 247.4,681.0 249.5,697.4 243.4,698.4 247.4,726.0 244.4,730.0 257.6,746.3 257.6,752.4 254.6,750.3 237.3,732.0 241.3,726.9 231.2,705.5 223.0,710.6 203.7,708.6 187.4,703.5 185.3,696.4 180.2,693.3 179.2,683.1 173.1,678.0 128.3,715.7 130.3,695.4 111.0,639.0 105.6,614.8 100.0,603.7 95.0,590.0 87.0,580.0 75.0,582.0 66.0,577.0 52.0,574.0 36.0,568.0 35.0,560.0 8.0,541.0"/></clipPath>
</svg>
<div class="b" style="left:85px;top:535.4px;width:90.6px;height:20.0px;background:#fdb66f;border:1.2px solid #1e1e1e;border-right:none;border-radius:2px 0 0 10px"></div>
<div class="b" style="left:175.6px;top:535.4px;width:91.4px;height:20.0px;background:#c7e7ed;border:1.2px solid #1e1e1e;border-left:2.5px solid #111;border-radius:0 10px 10px 0"></div>
<div class="t" style="left:93.30px;top:537.03px;font-size:16.5px;color:#8a8a8a;">O:</div>
<div class="t" style="left:116.60px;top:537.03px;font-size:16.5px;color:#151515;letter-spacing:0.35px;">10,824</div>
<div class="t" style="left:186.00px;top:537.03px;font-size:16.5px;color:#8a8a8a;">D:</div>
<div class="t" style="left:208.20px;top:537.03px;font-size:16.5px;color:#151515;letter-spacing:0.35px;">10,911</div>
<div class="b" style="left:261.6px;top:628.8px;width:79.0px;height:19.90000000000009px;background:#fdb66f;border:1.2px solid #1e1e1e;border-right:none;border-radius:2px 0 0 10px"></div>
<div class="b" style="left:340.6px;top:628.8px;width:79.69999999999999px;height:19.90000000000009px;background:#c7e7ed;border:1.2px solid #1e1e1e;border-left:2.5px solid #111;border-radius:0 10px 10px 0"></div>
<div class="t" style="left:268.50px;top:630.43px;font-size:16.5px;color:#8a8a8a;">O:</div>
<div class="t" style="left:291.60px;top:630.43px;font-size:16.5px;color:#151515;letter-spacing:0.35px;">1,064</div>
<div class="t" style="left:348.90px;top:630.43px;font-size:16.5px;color:#8a8a8a;">D:</div>
<div class="t" style="left:371.00px;top:630.43px;font-size:16.5px;color:#151515;letter-spacing:0.35px;">1,331</div>
<div class="b" style="left:-23px;top:639.1px;width:77.8px;height:20.299999999999955px;background:#fdb66f;border:1.2px solid #1e1e1e;border-right:none;border-radius:2px 0 0 10px"></div>
<div class="b" style="left:54.8px;top:639.1px;width:79.60000000000001px;height:20.299999999999955px;background:#c7e7ed;border:1.2px solid #1e1e1e;border-left:2.5px solid #111;border-radius:0 10px 10px 0"></div>
<div class="t" style="left:-16.00px;top:640.73px;font-size:16.5px;color:#8a8a8a;">O:</div>
<div class="t" style="left:5.80px;top:640.73px;font-size:16.5px;color:#151515;letter-spacing:0.35px;">1,841</div>
<div class="t" style="left:62.90px;top:640.73px;font-size:16.5px;color:#8a8a8a;">D:</div>
<div class="t" style="left:84.90px;top:640.73px;font-size:16.5px;color:#151515;letter-spacing:0.35px;">1,597</div>
<div class="b" style="left:155px;top:758.1px;width:79.80000000000001px;height:20.899999999999977px;background:#fdb66f;border:1.2px solid #1e1e1e;border-right:none;border-radius:2px 0 0 10px"></div>
<div class="b" style="left:234.8px;top:758.1px;width:79.80000000000001px;height:20.899999999999977px;background:#c7e7ed;border:1.2px solid #1e1e1e;border-left:2.5px solid #111;border-radius:0 10px 10px 0"></div>
<div class="t" style="left:162.50px;top:759.73px;font-size:16.5px;color:#8a8a8a;">O:</div>
<div class="t" style="left:185.70px;top:759.73px;font-size:16.5px;color:#151515;letter-spacing:0.35px;">1,415</div>
<div class="t" style="left:242.70px;top:759.73px;font-size:16.5px;color:#8a8a8a;">D:</div>
<div class="t" style="left:265.20px;top:759.73px;font-size:16.5px;color:#151515;letter-spacing:0.35px;">1,302</div>
<div class="b" style="left:0px;top:998px;width:15px;height:10px;background:#fdb96f;"></div>
<div class="b" style="left:0px;top:1011px;width:15px;height:10px;background:#c5e7ec;"></div>
<div class="b" style="left:15px;top:998px;width:117.5px;height:10px;background:#f59255;"></div>
<div class="b" style="left:15px;top:1011px;width:117.5px;height:10px;background:#93d0c7;"></div>
<div class="b" style="left:132.5px;top:998px;width:116.5px;height:10px;background:#e04b26;"></div>
<div class="b" style="left:132.5px;top:1011px;width:116.5px;height:10px;background:#3cb0ae;"></div>
<div class="b" style="left:249px;top:998px;width:117.5px;height:10px;background:#d91f27;"></div>
<div class="b" style="left:249px;top:1011px;width:117.5px;height:10px;background:#1479a5;"></div>
<div class="b" style="left:366.5px;top:998px;width:116.5px;height:10px;background:#a21b22;"></div>
<div class="b" style="left:366.5px;top:1011px;width:116.5px;height:10px;background:#0c4c8b;"></div>
<svg style="left:7.5px;top:991.5px" width="15" height="7" viewBox="0 0 15 7"><path d="M0 0.5 Q7.5 1.5 15 0.5 L7.5 6.5 Z" fill="#2b2b2b"/></svg>
<div class="b" style="left:14.25px;top:997px;width:1.5px;height:27px;background:#555;"></div>
<div class="b" style="left:-40px;top:1024px;width:62px;height:18px;background:#2b2b2b;"></div>
<div class="t" style="left:0.33px;top:1028.11px;font-size:10.5px;color:#fff;font-weight:bold;">ips</div>
<svg style="left:125.0px;top:991.5px" width="15" height="7" viewBox="0 0 15 7"><path d="M0 0.5 Q7.5 1.5 15 0.5 L7.5 6.5 Z" fill="#2b2b2b"/></svg>
<div class="b" style="left:131.75px;top:997px;width:1.5px;height:44px;background:#555;"></div>
<div class="b" style="left:74px;top:1041px;width:65px;height:17px;background:#2b2b2b;"></div>
<div class="t" style="left:80.90px;top:1044.61px;font-size:10.5px;color:#fff;font-weight:bold;letter-spacing:-0.280px;">4,366 Trips</div>
<svg style="left:241.5px;top:991.5px" width="15" height="7" viewBox="0 0 15 7"><path d="M0 0.5 Q7.5 1.5 15 0.5 L7.5 6.5 Z" fill="#2b2b2b"/></svg>
<div class="b" style="left:248.25px;top:997px;width:1.5px;height:44px;background:#555;"></div>
<div class="b" style="left:243.2px;top:1041px;width:65.5px;height:17.700000000000045px;background:#2b2b2b;"></div>
<div class="t" style="left:250.35px;top:1044.96px;font-size:10.5px;color:#fff;font-weight:bold;letter-spacing:-0.280px;">6,548 Trips</div>
<svg style="left:359.0px;top:991.5px" width="15" height="7" viewBox="0 0 15 7"><path d="M0 0.5 Q7.5 1.5 15 0.5 L7.5 6.5 Z" fill="#2b2b2b"/></svg>
<div class="b" style="left:365.75px;top:997px;width:1.5px;height:27px;background:#555;"></div>
<div class="b" style="left:360px;top:1024px;width:66.80000000000001px;height:18px;background:#2b2b2b;"></div>
<div class="t" style="left:367.80px;top:1028.11px;font-size:10.5px;color:#fff;font-weight:bold;letter-spacing:-0.280px;">8,730 Trips</div>
</body></html>
